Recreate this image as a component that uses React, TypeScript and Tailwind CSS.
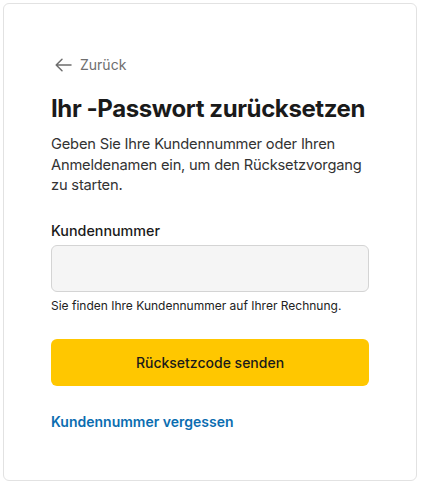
import React from "react";

export default function App() {
  return (
    <div className="w-[422px] h-[484px] bg-white p-[3px] pr-[5px] pb-[3px]" style={{ fontFamily: "Inter, 'Noto Sans', sans-serif" }}>
      <div className="h-[478px] w-[414px] rounded-md border border-[#e2e2e2] bg-white px-[47px] pt-[51px]">
        <a className="flex h-[20px] items-center gap-[8px] pl-[4px] text-[14px] leading-[20px] text-[#6e6e6e]">
          <svg width="17" height="14" viewBox="0 0 17 14" fill="none" stroke="#6e6e6e" strokeWidth="1.5" strokeLinecap="round" strokeLinejoin="round">
            <path d="M16 7H1.5M7 1.2L1.2 7L7 12.8" />
          </svg>
          <span>Zurück</span>
        </a>
        <h1 className="mt-[19px] whitespace-nowrap text-[24px] font-bold leading-[30px] tracking-[-0.4px] text-[#1a1a1a]">Ihr -Passwort zurücksetzen</h1>
        <p className="mt-[10px] text-[14.7px] leading-[20.5px] text-[#333] tracking-[-0.2px]">
          Geben Sie Ihre Kundennummer oder Ihren Anmeldenamen ein, um den Rücksetzvorgang zu starten.
        </p>
        <label className="mt-[25px] block text-[14.3px] font-medium leading-[20px] text-[#1a1a1a]">Kundennummer</label>
        <input className="mt-[4px] block h-[47px] w-[318px] rounded-[6px] border border-[#d4d4d4] bg-[#f5f5f5]" />
        <p className="mt-[6px] text-[12px] leading-[16px] text-[#222]">Sie finden Ihre Kundennummer auf Ihrer Rechnung.</p>
        <button className="mt-[25px] flex h-[47px] w-[318px] items-center justify-center rounded-[6px] bg-[#ffc700] text-[14px] font-medium text-[#1a1a1a]">
          Rücksetzcode senden
        </button>
        <a className="mt-[26px] block text-[14px] font-semibold leading-[20px] text-[#0b6db0]">Kundennummer vergessen</a>
      </div>
    </div>
  );
}
